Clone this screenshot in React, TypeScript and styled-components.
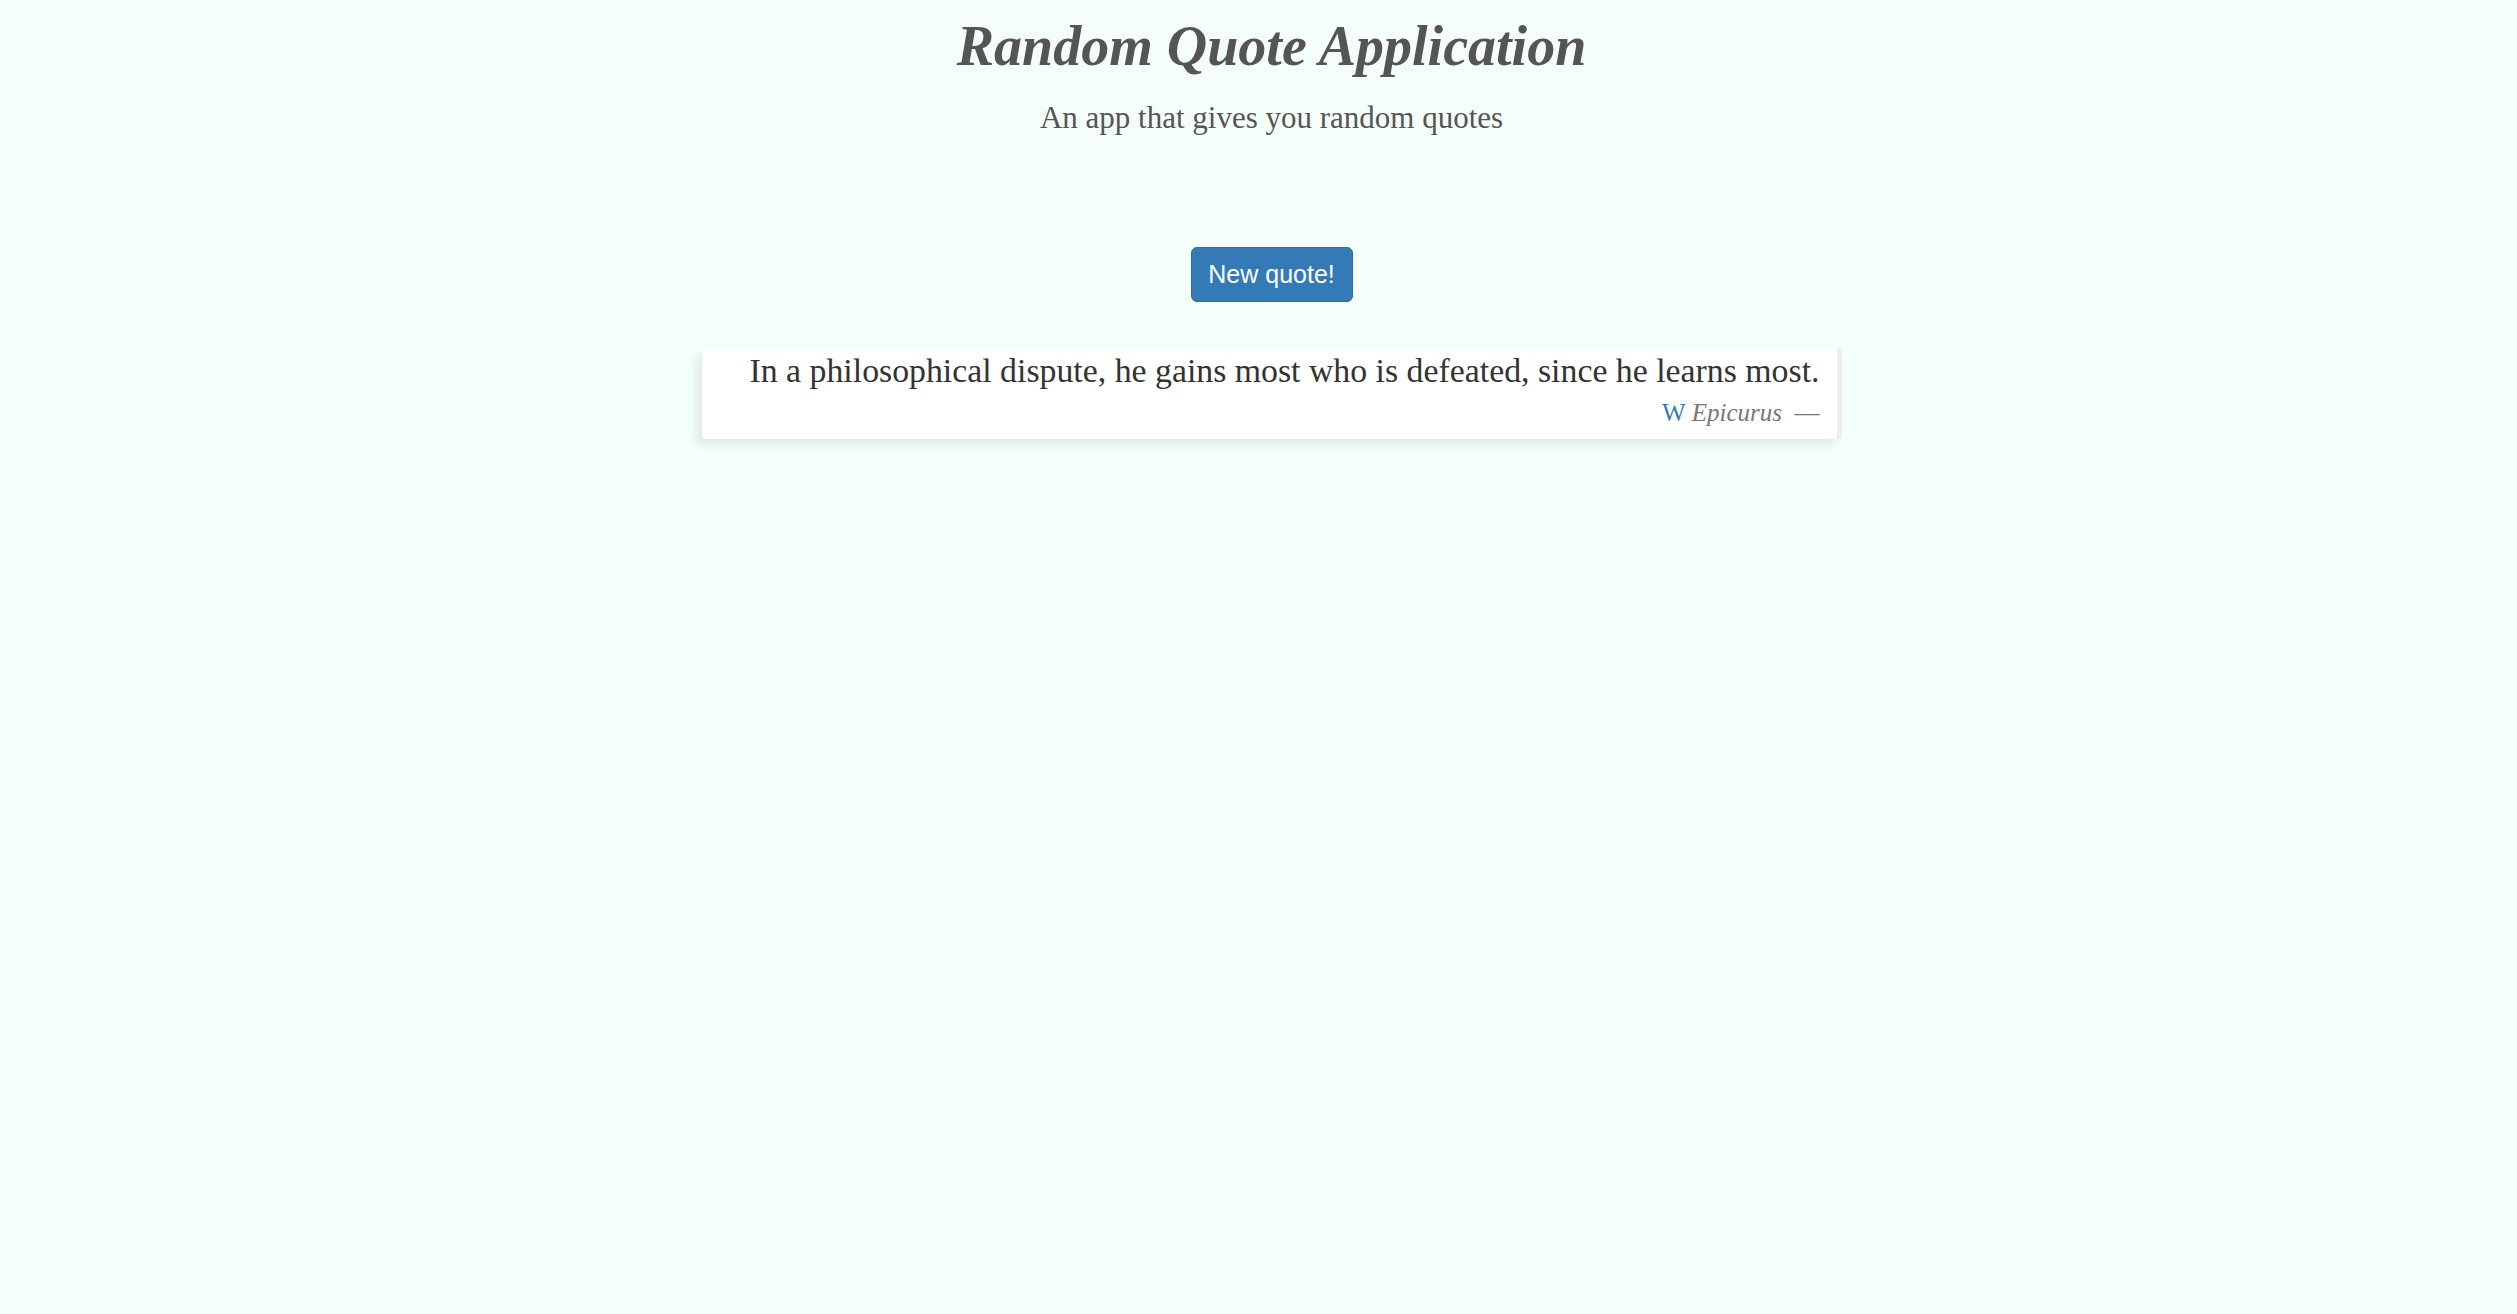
import React from "react";
import styled, { createGlobalStyle } from "styled-components";

const GlobalStyle = createGlobalStyle`
  html, body {
    margin: 0;
    padding: 0;
    background: #f5fffa;
  }
  body {
    min-height: 100vh;
    font-family: "Liberation Serif", "Times New Roman", serif;
  }
`;

const Page = styled.main`
  display: flex;
  flex-direction: column;
  align-items: center;
  padding-left: 26px;
  min-height: 100vh;
  box-sizing: border-box;
`;

const Title = styled.h1`
  margin: 17px 0 0;
  font-family: "Liberation Serif", "Times New Roman", serif;
  font-style: italic;
  font-weight: 700;
  font-size: 56px;
  line-height: 58px;
  color: #555555;
`;

const Subtitle = styled.p`
  margin: 26px 0 0;
  font-family: "Liberation Serif", "Times New Roman", serif;
  font-size: 31px;
  line-height: 33px;
  color: #555555;
`;

const QuoteButton = styled.button`
  margin-top: 113px;
  width: 162px;
  height: 55px;
  border: 1px solid #2e6da4;
  border-radius: 6px;
  background: #337ab7;
  color: #ffffff;
  font-family: "Liberation Sans", Arial, sans-serif;
  font-size: 25px;
  padding: 0;
  cursor: pointer;
`;

const Card = styled.blockquote`
  margin: 46px 0 0;
  width: 1140px;
  box-sizing: border-box;
  padding: 3px 17px 11px 20px;
  background: #ffffff;
  border-right: 5px solid #eeeeee;
  border-radius: 4px;
  box-shadow: -6px 6px 8px rgba(0, 0, 0, 0.08);
  text-align: right;
`;

const QuoteText = styled.p`
  margin: 0;
  font-family: "Liberation Serif", "Times New Roman", serif;
  font-size: 33.8px;
  line-height: 39px;
  color: #333333;
`;

const Footer = styled.footer`
  margin-top: 7px;
  font-family: "Liberation Serif", "Times New Roman", serif;
  font-size: 25px;
  line-height: 31px;
  color: #777777;
`;

const WikiLink = styled.a`
  color: #337ab7;
  text-decoration: none;
  margin-right: 6px;
`;

const Author = styled.cite`
  font-style: italic;
`;

export default function App() {
  return (
    <>
      <GlobalStyle />
      <Page>
        <Title>Random Quote Application</Title>
        <Subtitle>An app that gives you random quotes</Subtitle>
        <QuoteButton type="button">New quote!</QuoteButton>
        <Card>
          <QuoteText>
            In a philosophical dispute, he gains most who is defeated, since he learns most.
          </QuoteText>
          <Footer>
            <WikiLink href="#">W</WikiLink>
            <Author>Epicurus</Author>
            {"\u00A0 \u2014"}
          </Footer>
        </Card>
      </Page>
    </>
  );
}
